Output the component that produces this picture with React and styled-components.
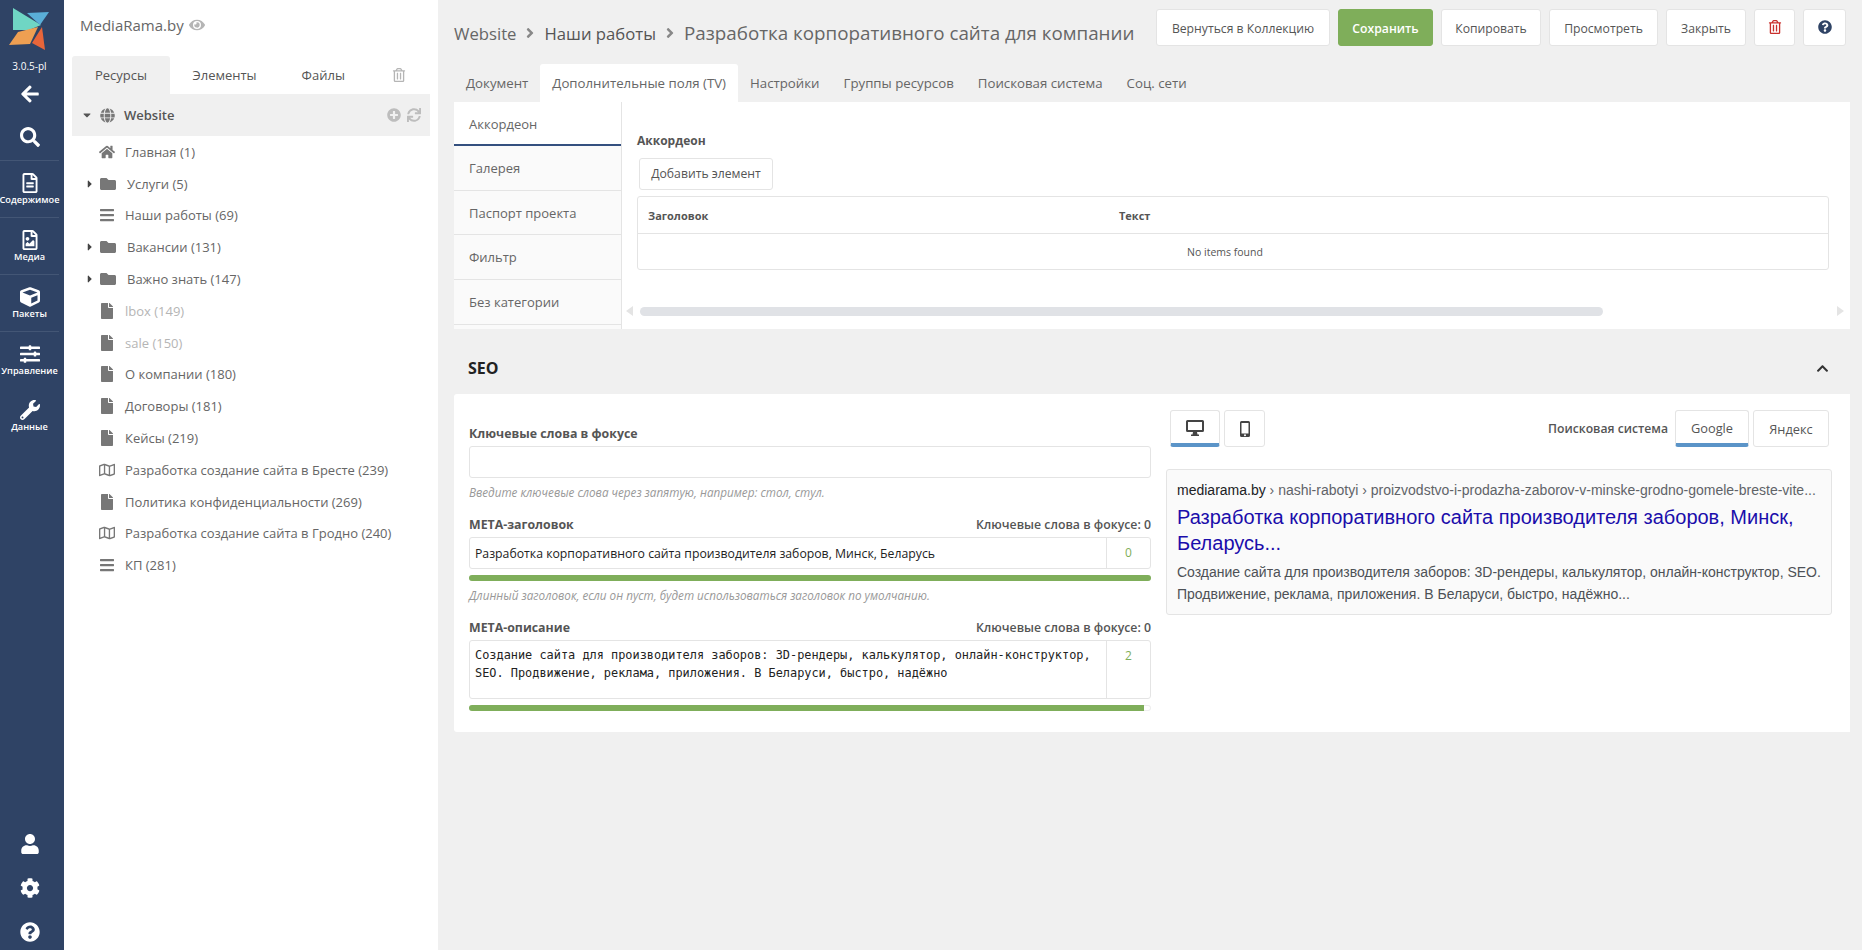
import React from "react";
import styled, { createGlobalStyle } from "styled-components";
import {
  FaAngleRight,
  FaArrowLeft,
  FaBars,
  FaCaretDown,
  FaCaretRight,
  FaChevronUp,
  FaCog,
  FaCube,
  FaEye,
  FaFile,
  FaFolder,
  FaGlobe,
  FaHome,
  FaPlusCircle,
  FaQuestionCircle,
  FaRegFileAlt,
  FaRegFileImage,
  FaRegMap,
  FaRegTrashAlt,
  FaSearch,
  FaSlidersH,
  FaSync,
  FaUser,
  FaWrench,
} from "react-icons/fa";

const GlobalStyle = createGlobalStyle`
  html, body {
    margin: 0;
    padding: 0;
    height: 100%;
    overflow: hidden;
    background: #f0f0f0;
    font-family: "Open Sans", "Noto Sans", sans-serif;
    color: #555;
  }
  * { box-sizing: border-box; }
`;

const navItems = [
  { icon: FaRegFileAlt, label: "Содержимое" },
  { icon: FaRegFileImage, label: "Медиа" },
  { icon: FaCube, label: "Пакеты" },
  { icon: FaSlidersH, label: "Управление" },
  { icon: FaWrench, label: "Данные", last: true },
];

const treeItems = [
  { icon: FaHome, size: 18, label: "Главная (1)" },
  { icon: FaFolder, size: 16, label: "Услуги (5)", folder: true },
  { icon: FaBars, size: 16, label: "Наши работы (69)" },
  { icon: FaFolder, size: 16, label: "Вакансии (131)", folder: true },
  { icon: FaFolder, size: 16, label: "Важно знать (147)", folder: true },
  { icon: FaFile, size: 16, label: "lbox (149)", muted: true },
  { icon: FaFile, size: 16, label: "sale (150)", muted: true },
  { icon: FaFile, size: 16, label: "О компании (180)" },
  { icon: FaFile, size: 16, label: "Договоры (181)" },
  { icon: FaFile, size: 16, label: "Кейсы (219)" },
  { icon: FaRegMap, size: 18, label: "Разработка создание сайта в Бресте (239)" },
  { icon: FaFile, size: 16, label: "Политика конфиденциальности (269)" },
  { icon: FaRegMap, size: 18, label: "Разработка создание сайта в Гродно (240)" },
  { icon: FaBars, size: 16, label: "КП (281)" },
];

const pageTabs = [
  "Документ",
  "Дополнительные поля (TV)",
  "Настройки",
  "Группы ресурсов",
  "Поисковая система",
  "Соц. сети",
];

const tvTabs = ["Аккордеон", "Галерея", "Паспорт проекта", "Фильтр", "Без категории"];

const Logo = () => (
  <svg width="42" height="44" viewBox="0 0 42 44">
    <polygon points="4,0 32,17 20,22 4,22" fill="#6fd6c4" />
    <polygon points="18,5 40,4 31,17" fill="#5aafd8" />
    <polygon points="0,37 9,24 29,19 21,36" fill="#ee9f52" />
    <polygon points="33,19 36,42 23,35" fill="#e8663a" />
  </svg>
);

const DesktopIcon = () => (
  <svg width="18" height="16" viewBox="0 0 18 16" fill="#444">
    <path d="M1.5 0h15A1.5 1.5 0 0 1 18 1.5v9a1.5 1.5 0 0 1-1.5 1.5h-15A1.5 1.5 0 0 1 0 10.500v-9A1.500 1.500 0 0 1 1.500 0zM2 2v8h14V2z" fillRule="evenodd" />
    <path d="M7 12h4l.5 2.500H13V16H5v-1.500h1.500z" />
  </svg>
);

const MobileIcon = () => (
  <svg width="10" height="16" viewBox="0 0 10 16" fill="#444">
    <path d="M1.500 0h7A1.500 1.500 0 0 1 10 1.500v13A1.500 1.500 0 0 1 8.500 16h-7A1.500 1.500 0 0 1 0 14.500v-13A1.500 1.500 0 0 1 1.500 0zM1.500 2v10.500h7V2zM5 13.200a1 1 0 1 0 0 2 1 1 0 0 0 0-2z" fillRule="evenodd" />
  </svg>
);

const App = () => {
  return (
    <Page>
      <GlobalStyle />
      <Sidebar>
        <LogoBox>
          <Logo />
          <Version>3.0.5-pl</Version>
        </LogoBox>
        <BackButton>
          <FaArrowLeft size={20} />
        </BackButton>
        <SearchButton>
          <FaSearch size={20} />
        </SearchButton>
        {navItems.map((item) => (
          <NavItem key={item.label} $last={item.last}>
            <NavIcon>
              <item.icon size={20} />
            </NavIcon>
            <span>{item.label}</span>
          </NavItem>
        ))}
        <SidebarBottom>
          <FaUser size={20} />
          <FaCog size={20} />
          <FaQuestionCircle size={20} />
        </SidebarBottom>
      </Sidebar>

      <TreePanel>
        <SiteName>
          MediaRama.by <FaEye size={16} color="#b5b5b5" />
        </SiteName>
        <TreeTabs>
          <TreeTab $active>Ресурсы</TreeTab>
          <TreeTab>Элементы</TreeTab>
          <TreeTab>Файлы</TreeTab>
          <TrashTab>
            <FaRegTrashAlt size={14} />
          </TrashTab>
        </TreeTabs>
        <RootRow>
          <FaCaretDown size={12} color="#555" />
          <FaGlobe size={15} color="#777" />
          <RootName>Website</RootName>
          <RootActions>
            <FaPlusCircle size={14} />
            <FaSync size={14} />
          </RootActions>
        </RootRow>
        <div>
          {treeItems.map((item) => (
            <TreeRow key={item.label} $muted={item.muted}>
              <Caret>{item.folder && <FaCaretRight size={12} color="#444" />}</Caret>
              <TreeIcon $folder={item.folder}>
                <item.icon size={item.size} />
              </TreeIcon>
              <span>{item.label}</span>
            </TreeRow>
          ))}
        </div>
      </TreePanel>

      <Main>
        <TopBar>
          <Crumbs>
            <ShortCrumb>Website</ShortCrumb>
            <FaAngleRight size={16} color="#888" />
            <ShortCrumb $dark>Наши работы</ShortCrumb>
            <FaAngleRight size={16} color="#888" />
            <span>Разработка корпоративного сайта для компании</span>
          </Crumbs>
          <Actions>
            <ActionButton $w={174}>Вернуться в Коллекцию</ActionButton>
            <ActionButton $w={95} $primary>
              Сохранить
            </ActionButton>
            <ActionButton $w={100}>Копировать</ActionButton>
            <ActionButton $w={109}>Просмотреть</ActionButton>
            <ActionButton $w={80}>Закрыть</ActionButton>
            <ActionButton $w={41}>
              <FaRegTrashAlt size={14} color="#c9302c" />
            </ActionButton>
            <ActionButton $w={43}>
              <FaQuestionCircle size={14} color="#2f4365" />
            </ActionButton>
          </Actions>
        </TopBar>

        <PageTabs>
          {pageTabs.map((tab, i) => (
            <PageTab key={tab} $active={i === 1}>
              {tab}
            </PageTab>
          ))}
        </PageTabs>

        <TvPanel>
          <TvTabs>
            {tvTabs.map((tab, i) => (
              <TvTab key={tab} $active={i === 0}>
                {tab}
              </TvTab>
            ))}
          </TvTabs>
          <TvBody>
            <TvLabel>Аккордеон</TvLabel>
            <AddButton>Добавить элемент</AddButton>
            <TvTable>
              <TvHead>
                <TitleCol>Заголовок</TitleCol>
                <span>Текст</span>
              </TvHead>
              <TvEmpty>No items found</TvEmpty>
            </TvTable>
            <ScrollRow>
              <ArrowLeft />
              <ScrollTrack>
                <ScrollThumb />
              </ScrollTrack>
              <ArrowRight />
            </ScrollRow>
          </TvBody>
        </TvPanel>

        <SeoHeader>
          <span>SEO</span>
          <FaChevronUp size={13} color="#333" />
        </SeoHeader>

        <SeoPanel>
          <SeoForm>
            <FieldLabel>Ключевые слова в фокусе</FieldLabel>
            <TextBox />
            <Hint>Введите ключевые слова через запятую, например: стол, стул.</Hint>

            <FieldHead>
              <FieldLabel>META-заголовок</FieldLabel>
              <FocusCount>Ключевые слова в фокусе: 0</FocusCount>
            </FieldHead>
            <CountedBox>
              <BoxText>Разработка корпоративного сайта производителя заборов, Минск, Беларусь</BoxText>
              <Count>0</Count>
            </CountedBox>
            <Progress>
              <ProgressFill style={{ width: "100%" }} />
            </Progress>
            <Hint>Длинный заголовок, если он пуст, будет использоваться заголовок по умолчанию.</Hint>

            <FieldHead>
              <FieldLabel>META-описание</FieldLabel>
              <FocusCount>Ключевые слова в фокусе: 0</FocusCount>
            </FieldHead>
            <CountedBox $tall>
              <MonoText>
                Создание сайта для производителя заборов: 3D-рендеры, калькулятор, онлайн-конструктор,
                SEO. Продвижение, реклама, приложения. В Беларуси, быстро, надёжно
              </MonoText>
              <Count>2</Count>
            </CountedBox>
            <Progress>
              <ProgressFill style={{ width: "99%" }} />
            </Progress>
          </SeoForm>

          <SeoPreview>
            <PreviewBar>
              <ToggleGroup>
                <Toggle $active $w={50}>
                  <DesktopIcon />
                </Toggle>
                <Toggle $w={41}>
                  <MobileIcon />
                </Toggle>
              </ToggleGroup>
              <ToggleGroup>
                <EngineLabel>Поисковая система</EngineLabel>
                <Toggle $active $w={74}>
                  Google
                </Toggle>
                <Toggle $w={76}>Яндекс</Toggle>
              </ToggleGroup>
            </PreviewBar>
            <SnippetCard>
              <SnippetUrl>
                <b>mediarama.by</b> › nashi-rabotyi › proizvodstvo-i-prodazha-zaborov-v-minske-grodno-gomele-breste-vite...
              </SnippetUrl>
              <SnippetTitle>Разработка корпоративного сайта производителя заборов, Минск, Беларусь...</SnippetTitle>
              <SnippetText>
                Создание сайта для производителя заборов: 3D-рендеры, калькулятор, онлайн-конструктор, SEO. Продвижение,
                реклама, приложения. В Беларуси, быстро, надёжно...
              </SnippetText>
            </SnippetCard>
          </SeoPreview>
        </SeoPanel>
      </Main>
    </Page>
  );
};

const Page = styled.div`
  display: flex;
  height: 950px;
  width: 1862px;
`;

const Sidebar = styled.nav`
  width: 64px;
  flex: none;
  display: flex;
  flex-direction: column;
  align-items: center;
  padding-right: 5px;
  background: #2f4365;
  color: #fff;
`;

const LogoBox = styled.div`
  display: flex;
  flex-direction: column;
  align-items: center;
  padding-top: 8px;
`;

const Version = styled.div`
  font-size: 10px;
  margin-top: 7px;
  line-height: 14px;
  margin-bottom: 1px;
`;

const BackButton = styled.div`
  display: flex;
  justify-content: center;
  margin-top: 10px;
  height: 20px;
`;

const SearchButton = styled.div`
  display: flex;
  justify-content: center;
  padding-top: 23px;
  width: 100%;
  height: 56px;
`;

const NavItem = styled.div`
  width: 100%;
  height: 57px;
  display: flex;
  flex-direction: column;
  align-items: center;
  padding-top: 11px;
  font-size: 9.2px;
  line-height: 12px;
  font-weight: 600;
  white-space: nowrap;
  border-top: ${(p) => (p.$last ? "none" : "1px solid #435675")};
`;

const NavIcon = styled.span`
  display: flex;
  align-items: center;
  height: 22px;
`;

const SidebarBottom = styled.div`
  margin-top: auto;
  display: flex;
  flex-direction: column;
  align-items: center;
  gap: 24px;
  padding-bottom: 8px;
`;

const TreePanel = styled.aside`
  width: 374px;
  flex: none;
  background: #fff;
  padding-left: 8px;
  padding-right: 8px;
`;

const SiteName = styled.div`
  display: flex;
  align-items: center;
  gap: 5px;
  height: 56px;
  padding: 0 0 6px 8px;
  font-size: 15px;
  color: #666;
`;

const TreeTabs = styled.div`
  display: flex;
  height: 38px;
  align-items: stretch;
`;

const TreeTab = styled.div`
  display: flex;
  align-items: center;
  justify-content: center;
  width: ${(p) => (p.$active ? "98px" : "auto")};
  padding: ${(p) => (p.$active ? "0" : "0 22.5px")};
  font-size: 13px;
  color: #555;
  background: ${(p) => (p.$active ? "#f0f0f0" : "transparent")};
  border-radius: 3px 3px 0 0;
`;

const TrashTab = styled.div`
  display: flex;
  align-items: center;
  margin-left: 25px;
  color: #b5b5b5;
`;

const RootRow = styled.div`
  display: flex;
  align-items: center;
  height: 42px;
  background: #f0f0f0;
  padding: 0 9px;
  gap: 7px;
  color: #555;
`;

const RootName = styled.span`
  font-size: 13px;
  font-weight: 600;
  margin-left: 2px;
`;

const RootActions = styled.div`
  margin-left: auto;
  display: flex;
  gap: 6px;
  color: #bdbdbd;
`;

const TreeRow = styled.div`
  display: flex;
  align-items: center;
  height: 31.8px;
  padding-left: 12px;
  font-size: 13px;
  color: ${(p) => (p.$muted ? "#b5b5b5" : "#666")};
  white-space: nowrap;
`;

const Caret = styled.span`
  width: 15px;
  display: flex;
  justify-content: flex-start;
`;

const TreeIcon = styled.span`
  width: 18px;
  margin-right: ${(p) => (p.$folder ? "10px" : "8px")};
  padding-right: ${(p) => (p.$folder ? "0" : "2px")};
  display: flex;
  justify-content: center;
  color: #777;
`;

const Main = styled.main`
  flex: 1;
  min-width: 0;
  padding: 0 12px 0 16px;
`;

const TopBar = styled.div`
  display: flex;
  justify-content: space-between;
  height: 64px;
  padding-top: 9px;
`;

const Crumbs = styled.div`
  display: flex;
  align-items: center;
  height: 48px;
  gap: 6px;
  font-size: 18.8px;
  color: #666;
  white-space: nowrap;
`;

const ShortCrumb = styled.span`
  font-size: 16.7px;
  color: ${(p) => (p.$dark ? "#555" : "#666")};
`;

const Actions = styled.div`
  display: flex;
  gap: 8px;
  height: 37px;
  margin-right: 4px;
`;

const ActionButton = styled.button`
  width: ${(p) => p.$w}px;
  height: 37px;
  padding: 2px 0 0;
  font-family: inherit;
  font-size: 12.2px;
  font-weight: ${(p) => (p.$primary ? 600 : 400)};
  border-radius: 3px;
  color: ${(p) => (p.$primary ? "#fff" : "#555")};
  background: ${(p) => (p.$primary ? "#7fae5a" : "#fff")};
  border: 1px solid ${(p) => (p.$primary ? "#7fae5a" : "#e4e4e4")};
  white-space: nowrap;
`;

const PageTabs = styled.div`
  display: flex;
  height: 38px;
`;

const PageTab = styled.div`
  display: flex;
  align-items: center;
  padding: 0 12px;
  font-size: 13.25px;
  color: #666;
  background: ${(p) => (p.$active ? "#fff" : "transparent")};
  border-radius: 3px 3px 0 0;
`;

const TvPanel = styled.section`
  display: flex;
  height: 227px;
  background: #fff;
`;

const TvTabs = styled.div`
  width: 168px;
  flex: none;
  overflow: hidden;
  background: #fafafa;
  border-right: 1px solid #e4e4e4;
`;

const TvTab = styled.div`
  display: flex;
  align-items: center;
  height: ${(p) => (p.$active ? "44px" : "44.7px")};
  padding-left: 15px;
  padding-top: ${(p) => (p.$active ? "2px" : "0")};
  font-size: 13px;
  color: #666;
  background: ${(p) => (p.$active ? "#fff" : "#fafafa")};
  border-bottom: ${(p) => (p.$active ? "2px solid #34507f" : "1px solid #e4e4e4")};
`;

const TvBody = styled.div`
  flex: 1;
  min-width: 0;
  padding: 30px 21px 0 15px;
`;

const TvLabel = styled.div`
  font-size: 12px;
  font-weight: 700;
  line-height: 17px;
  color: #555;
`;

const AddButton = styled.button`
  display: block;
  width: 134px;
  height: 32px;
  margin: 9px 0 6px 2px;
  padding: 0 0 2px;
  font-family: inherit;
  font-size: 12.2px;
  color: #555;
  background: #fff;
  border: 1px solid #e4e4e4;
  border-radius: 3px;
`;

const TvTable = styled.div`
  border: 1px solid #e4e4e4;
  border-radius: 3px;
`;

const TvHead = styled.div`
  display: flex;
  align-items: center;
  height: 37px;
  padding-left: 10px;
  font-size: 11px;
  font-weight: 700;
  color: #555;
  border-bottom: 1px solid #e4e4e4;
`;

const TitleCol = styled.span`
  width: 471px;
`;

const TvEmpty = styled.div`
  display: flex;
  align-items: center;
  justify-content: center;
  height: 35px;
  padding-right: 16px;
  font-size: 10.5px;
  color: #555;
`;

const ScrollRow = styled.div`
  display: flex;
  align-items: center;
  gap: 7px;
  margin: 36px -15px 0 -11px;
`;

const ScrollTrack = styled.div`
  flex: 1;
  height: 9px;
`;

const ScrollThumb = styled.div`
  width: 963px;
  height: 9px;
  background: #e0e2e6;
  border-radius: 5px;
`;

const ArrowLeft = styled.i`
  border: 5px solid transparent;
  border-left: 0;
  border-right: 7px solid #e4e4e4;
`;

const ArrowRight = styled.i`
  border: 5px solid transparent;
  border-right: 0;
  border-left: 7px solid #e4e4e4;
`;

const SeoHeader = styled.div`
  display: flex;
  align-items: center;
  justify-content: space-between;
  height: 65px;
  padding: 13px 21px 0 14px;
  font-size: 16px;
  font-weight: 700;
  color: #222;
`;

const SeoPanel = styled.section`
  display: flex;
  height: 338px;
  background: #fff;
  border-radius: 3px 0 0 3px;
  padding: 16px 21px 0 15px;
  gap: 15px;
`;

const SeoForm = styled.div`
  width: 682px;
  flex: none;
  padding-top: 14px;
`;

const FieldLabel = styled.div`
  font-size: 12.35px;
  font-weight: 700;
  line-height: 19px;
  color: #555;
  margin-bottom: 3px;
`;

const FieldHead = styled.div`
  display: flex;
  justify-content: space-between;
  margin-top: 15px;
`;

const FocusCount = styled.div`
  font-size: 12.3px;
  font-weight: 600;
  line-height: 19px;
  color: #555;
`;

const TextBox = styled.div`
  height: 32px;
  border: 1px solid #e4e4e4;
  border-radius: 3px;
`;

const Hint = styled.div`
  margin-top: 6px;
  font-size: 11.7px;
  font-style: italic;
  line-height: 16px;
  color: #999;
`;

const CountedBox = styled.div`
  display: flex;
  height: ${(p) => (p.$tall ? "59px" : "32px")};
  border: 1px solid #e4e4e4;
  border-radius: 3px;
`;

const BoxText = styled.div`
  flex: 1;
  padding-left: 5px;
  font-size: 12.25px;
  line-height: 31px;
  color: #222;
`;

const MonoText = styled.div`
  flex: 1;
  padding: 5px 5px;
  font-family: "DejaVu Sans Mono", monospace;
  font-size: 11.9px;
  line-height: 18px;
  color: #222;
`;

const Count = styled.div`
  width: 44px;
  flex: none;
  text-align: center;
  font-size: 12px;
  line-height: 30px;
  color: #7fae5a;
  border-left: 1px solid #e4e4e4;
`;

const Progress = styled.div`
  height: 6px;
  margin-top: 6px;
  background: #fff;
  box-shadow: inset 0 0 0 1px #eee;
  border-radius: 3px;
  overflow: hidden;
`;

const ProgressFill = styled.div`
  height: 100%;
  background: #7fae5a;
`;

const SeoPreview = styled.div`
  flex: 1;
  min-width: 0;
`;

const PreviewBar = styled.div`
  display: flex;
  justify-content: space-between;
  padding-left: 4px;
`;

const ToggleGroup = styled.div`
  display: flex;
  align-items: center;
  gap: 4px;
`;

const Toggle = styled.div`
  display: flex;
  align-items: center;
  justify-content: center;
  width: ${(p) => p.$w}px;
  height: 37px;
  padding-top: ${(p) => (p.$active ? "2px" : "0")};
  font-size: 12.8px;
  color: #555;
  border: 1px solid #e4e4e4;
  border-bottom: ${(p) => (p.$active ? "4px solid #5b94c8" : "1px solid #e4e4e4")};
  border-radius: 3px;
`;

const EngineLabel = styled.span`
  font-size: 12.2px;
  font-weight: 600;
  margin-right: 3px;
`;

const SnippetCard = styled.div`
  margin: 22px -3px 0 0;
  height: 146px;
  padding: 11px 10px;
  background: #fafafa;
  border: 1px solid #e4e4e4;
  border-radius: 3px;
  font-family: "Liberation Sans", Arial, sans-serif;
`;

const SnippetUrl = styled.div`
  font-size: 14px;
  line-height: 18px;
  color: #5f6368;
  white-space: nowrap;
  overflow: hidden;

  b {
    font-weight: 400;
    color: #202124;
  }
`;

const SnippetTitle = styled.div`
  margin-top: 5px;
  font-size: 20px;
  line-height: 26px;
  color: #1a0dab;
`;

const SnippetText = styled.div`
  margin-top: 5px;
  font-size: 14px;
  line-height: 22px;
  color: #4d5156;
`;

export default App;
